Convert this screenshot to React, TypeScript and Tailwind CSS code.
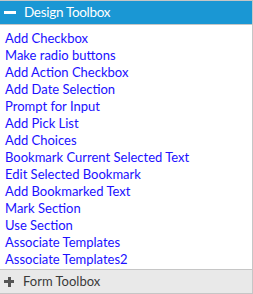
export default function App() {
  const actions = [
    "Add Checkbox",
    "Make radio buttons",
    "Add Action Checkbox",
    "Add Date Selection",
    "Prompt for Input",
    "Add Pick List",
    "Add Choices",
    "Bookmark Current Selected Text",
    "Edit Selected Bookmark",
    "Add Bookmarked Text",
    "Mark Section",
    "Use Section",
    "Associate Templates",
    "Associate Templates2",
  ]

  return (
    <div
      className="w-[253px] h-[294px] bg-white border-t border-r border-b border-[#c6c6c6] flex flex-col"
      style={{ fontFamily: "Lato, sans-serif" }}
    >
      <div className="h-[23px] bg-[#1a97d4] flex items-center text-white text-[13.5px] tracking-[-0.3px] border-b border-[#c6c6c6] box-content">
        <div className="w-[24px] pl-[4px]">
          <div className="w-[12px] h-[3px] bg-white" />
        </div>
        <span>Design Toolbox</span>
      </div>

      <div className="flex-1 pt-[5px] pl-[5px]">
        {actions.map((item) => (
          <div key={item} className="h-[17px] leading-[17px] text-[13px] text-[#2010ff] cursor-pointer">
            {item}
          </div>
        ))}
      </div>

      <div className="h-[24px] bg-[#e9e9e9] border-t border-[#c6c6c6] flex items-center text-[13px] text-[#3a3a3a]">
        <div className="w-[23px] pl-[4px]">
          <div className="relative w-[10px] h-[10px]">
            <div className="absolute left-0 top-[3.5px] w-[10px] h-[3px] bg-[#555]" />
            <div className="absolute top-0 left-[3.5px] w-[3px] h-[10px] bg-[#555]" />
          </div>
        </div>
        <span>Form Toolbox</span>
      </div>
    </div>
  )
}
